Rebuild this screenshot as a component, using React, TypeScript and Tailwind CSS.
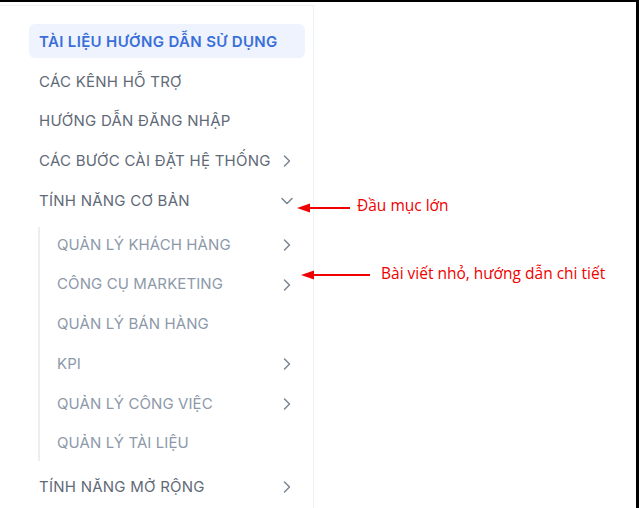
import React from "react";

const Chevron = ({ down = false }: { down?: boolean }) => (
  <svg width="20" height="20" viewBox="0 0 24 24" fill="none" stroke="#7b8694" strokeWidth="1.8" strokeLinecap="round" strokeLinejoin="round">
    {down ? <path d="m6 9 6 6 6-6" /> : <path d="m9 18 6-6-6-6" />}
  </svg>
);

const Row = ({ label, chevron, down, sub }: { label: string; chevron?: boolean; down?: boolean; sub?: boolean }) => (
  <div className={`flex h-[34px] items-center justify-between pr-2 ${sub ? "pl-[17px] text-[#8d99a9]" : "pl-[10px] text-[#5f6a77]"}`}>
    <span className={`text-[15px] font-normal ${sub ? "tracking-[0.1px]" : "tracking-[0.25px]"}`}>{label}</span>
    {chevron && <Chevron down={down} />}
  </div>
);

const Arrow = ({ len }: { len: number }) => (
  <svg width={len} height="12" viewBox={`0 0 ${len} 12`}>
    <polygon points={`0,6 13,1.5 13,10.5`} fill="#f00000" />
    <rect x="12" y="5" width={len - 12} height="2" fill="#f00000" />
  </svg>
);

export default function App() {
  return (
    <div className="relative h-[508px] w-[639px] overflow-hidden border-t-2 border-r-[3px] border-black bg-white" style={{ fontFamily: "Inter, 'Noto Sans', sans-serif" }}>
      <div className="mt-[3px] h-full w-[314px] border-t border-r border-[#eef0f3] pl-[29px] pr-[8px] pt-[18px]">
        <div className="flex flex-col gap-[5.75px]">
          <div className="flex h-[34px] items-center rounded-md bg-[#eef3fd] pl-[10px] pt-[2px]">
            <span className="text-[15px] font-semibold tracking-[0.35px] text-[#3a6fd9]">TÀI LIỆU HƯỚNG DẪN SỬ DỤNG</span>
          </div>
          <div className="pt-[1px]"><Row label="CÁC KÊNH HỖ TRỢ" /></div>
          <div className="-mt-[1px] pt-[1px]"><Row label="HƯỚNG DẪN ĐĂNG NHẬP" /></div>
          <div className="-mt-[1px] pt-[1px]"><Row label="CÁC BƯỚC CÀI ĐẶT HỆ THỐNG" chevron /></div>
          <div className="-mt-[1px] pt-[1px]"><Row label="TÍNH NĂNG CƠ BẢN" chevron down /></div>
          <div className="ml-[9px] mt-[3px] flex flex-col gap-[5.75px] border-l-2 border-[#eceef2] pt-[1px]">
            <Row sub label="QUẢN LÝ KHÁCH HÀNG" chevron />
            <Row sub label="CÔNG CỤ MARKETING" chevron />
            <Row sub label="QUẢN LÝ BÁN HÀNG" />
            <Row sub label="KPI" chevron />
            <Row sub label="QUẢN LÝ CÔNG VIỆC" chevron />
            <Row sub label="QUẢN LÝ TÀI LIỆU" />
          </div>
          <div className="mt-[4px]">
            <Row label="TÍNH NĂNG MỞ RỘNG" chevron />
          </div>
        </div>
      </div>

      <div className="absolute left-[297px] top-[194px] flex items-center" style={{ fontFamily: "'Open Sans', sans-serif" }}>
        <Arrow len={53} />
        <span className="relative -top-[2px] ml-[7px] text-[15.5px] text-[#f00000]">Đầu mục lớn</span>
      </div>
      <div className="absolute left-[301px] top-[261px] flex items-center" style={{ fontFamily: "'Open Sans', sans-serif" }}>
        <Arrow len={69} />
        <span className="relative -top-[1px] ml-[11px] text-[15.5px] text-[#f00000]">Bài viết nhỏ, hướng dẫn chi tiết</span>
      </div>
    </div>
  );
}
